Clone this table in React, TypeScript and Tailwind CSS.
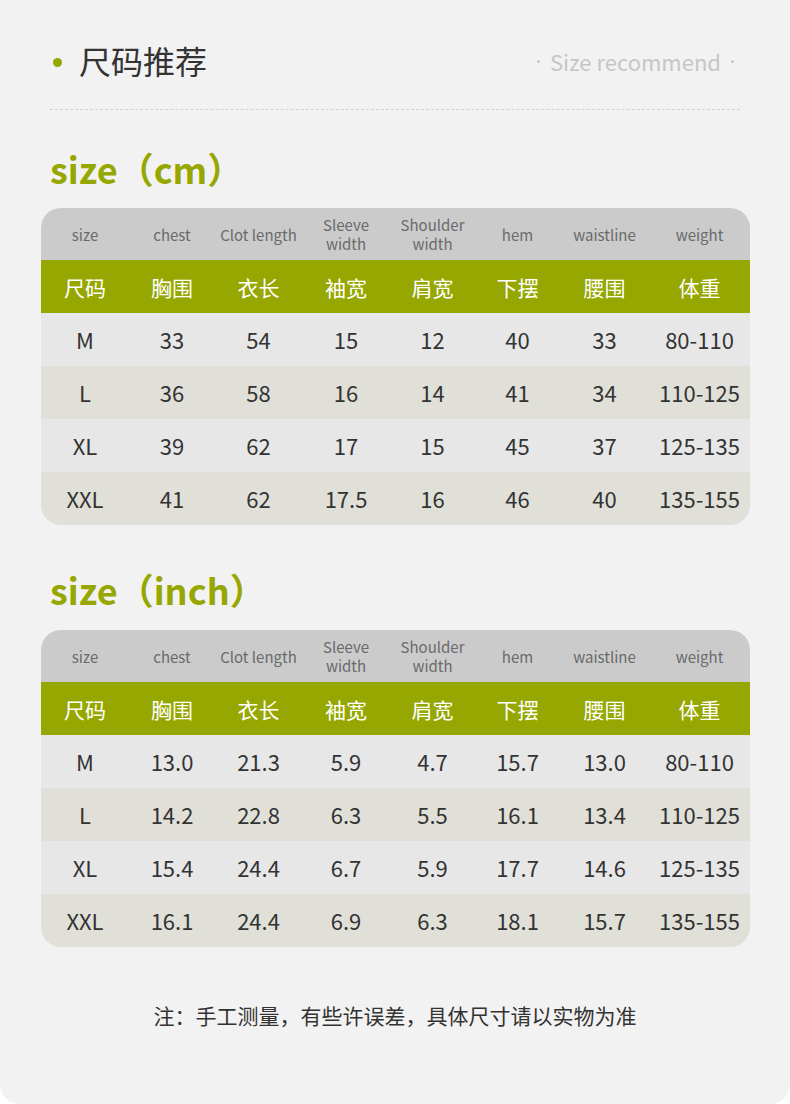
const cols = "grid grid-cols-[88px_86px_87px_88px_85px_85px_89px_101px]";

const enHead = ["size", "chest", "Clot length", "Sleeve\nwidth", "Shoulder\nwidth", "hem", "waistline", "weight"];
const cnHead = ["尺码", "胸围", "衣长", "袖宽", "肩宽", "下摆", "腰围", "体重"];

const cmRows = [
  ["M", "33", "54", "15", "12", "40", "33", "80-110"],
  ["L", "36", "58", "16", "14", "41", "34", "110-125"],
  ["XL", "39", "62", "17", "15", "45", "37", "125-135"],
  ["XXL", "41", "62", "17.5", "16", "46", "40", "135-155"],
];

const inchRows = [
  ["M", "13.0", "21.3", "5.9", "4.7", "15.7", "13.0", "80-110"],
  ["L", "14.2", "22.8", "6.3", "5.5", "16.1", "13.4", "110-125"],
  ["XL", "15.4", "24.4", "6.7", "5.9", "17.7", "14.6", "125-135"],
  ["XXL", "16.1", "24.4", "6.9", "6.3", "18.1", "15.7", "135-155"],
];

function SizeTable({ rows }: { rows: string[][] }) {
  return (
    <div className="mx-[41px] w-[709px] overflow-hidden rounded-[20px]">
      <div className={`${cols} h-[52px] bg-[#cbcbcb]`}>
        {enHead.map((h) => (
          <div
            key={h}
            className="flex items-center justify-center whitespace-pre-line text-center text-[15px] leading-[19px] text-[#6a6a6a]"
          >
            {h}
          </div>
        ))}
      </div>
      <div className={`${cols} h-[53px] bg-[#95a700]`}>
        {cnHead.map((h) => (
          <div key={h} className="flex items-center justify-center pt-[2px] text-[21px] text-white">
            {h}
          </div>
        ))}
      </div>
      {rows.map((r, i) => (
        <div
          key={i}
          className={`${cols} h-[53px] ${i % 2 === 0 ? "bg-[#e7e7e7]" : "bg-[#e0e0d8]"}`}
        >
          {r.map((c, j) => (
            <div key={j} className="flex items-center justify-center text-[22px] text-[#333333]">
              {c}
            </div>
          ))}
        </div>
      ))}
    </div>
  );
}

export default function App() {
  return (
    <div
      className="h-[1104px] w-[790px] bg-white"
      style={{ fontFamily: '"Noto Sans CJK SC", sans-serif' }}
    >
      <div className="flex h-full flex-col rounded-b-[20px] bg-[#f2f2f2]">
        <div className="mt-[42px] flex h-[36px] items-center justify-between px-[50px]">
          <div className="flex items-center gap-[17px]">
            <span className="ml-[3px] mt-[4px] h-[9px] w-[9px] rounded-full bg-[#95a700]" />
            <span className="text-[32px] leading-none text-[#333333]">尺码推荐</span>
          </div>
          <div className="mr-[6px] mt-[2px] flex items-center gap-[10px] text-[#c6c6c6]">
            <span className="h-[3px] w-[3px] rounded-full bg-[#c6c6c6]" />
            <span className="text-[22px]">Size recommend</span>
            <span className="h-[3px] w-[3px] rounded-full bg-[#c6c6c6]" />
          </div>
        </div>
        <div className="mx-[50px] mt-[31px] border-t border-dashed border-[#d2d2d2]" />

        <h2 className="mt-[38px] px-[50px] text-[36px] font-bold leading-[40px] text-[#95a700]">
          size（cm）
        </h2>
        <div className="mt-[20px]">
          <SizeTable rows={cmRows} />
        </div>

        <h2 className="mt-[44px] px-[50px] text-[36px] font-bold leading-[40px] text-[#95a700]">
          size（inch）
        </h2>
        <div className="mt-[21px]">
          <SizeTable rows={inchRows} />
        </div>

        <p className="mt-[56px] text-center text-[21px] leading-[24px] text-[#333333]">
          注：手工测量，有些许误差，具体尺寸请以实物为准
        </p>
      </div>
    </div>
  );
}
